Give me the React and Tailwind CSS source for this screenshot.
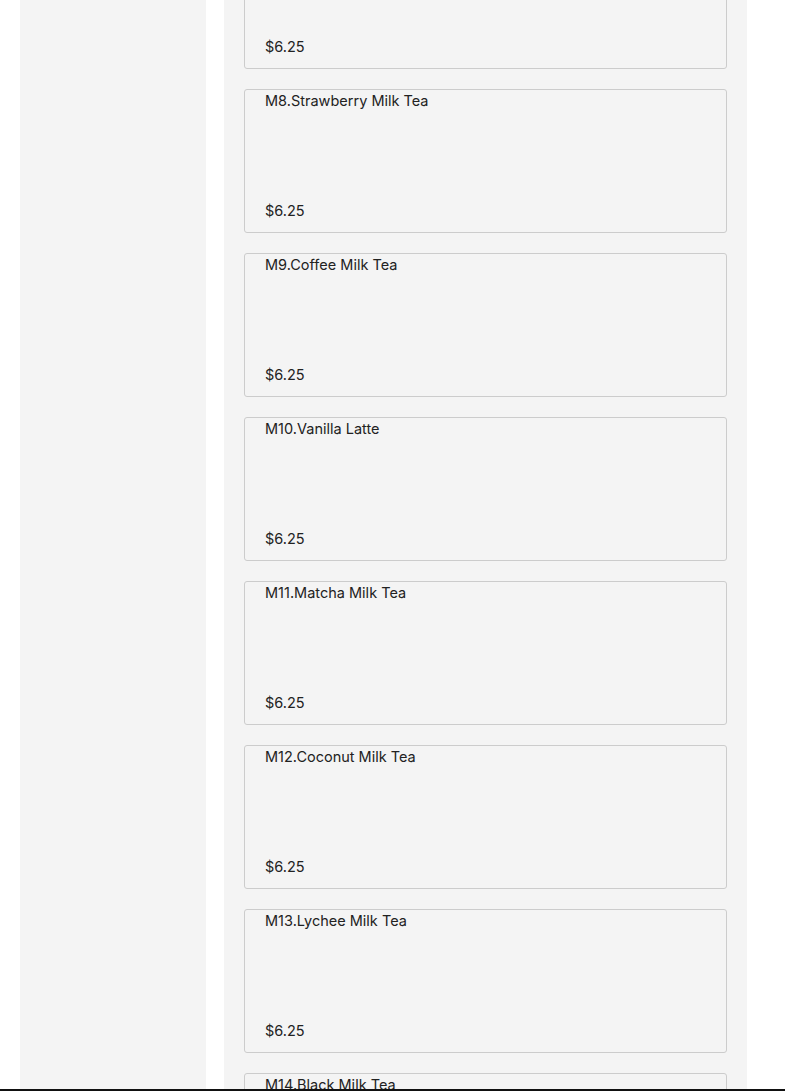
import React from 'react';

const items = [
  { code: 'M7', name: 'Taro Milk Tea', price: '$6.25' },
  { code: 'M8', name: 'Strawberry Milk Tea', price: '$6.25' },
  { code: 'M9', name: 'Coffee Milk Tea', price: '$6.25' },
  { code: 'M10', name: 'Vanilla Latte', price: '$6.25' },
  { code: 'M11', name: 'Matcha Milk Tea', price: '$6.25' },
  { code: 'M12', name: 'Coconut Milk Tea', price: '$6.25' },
  { code: 'M13', name: 'Lychee Milk Tea', price: '$6.25' },
  { code: 'M14', name: 'Black Milk Tea', price: '$6.25' },
];

const MenuCard = ({ item }) => (
  <div className="h-[144px] shrink-0 border border-[#cccccc] rounded-[3px] bg-[#f4f4f4] px-5 pt-[1px] pb-[11px] flex flex-col justify-between">
    <div className="text-[14.5px] leading-[20px] text-[#222]">
      {item.code}.{item.name}
    </div>
    <div className="text-[14.5px] leading-[20px] text-[#222]">{item.price}</div>
  </div>
);

const App = () => {
  return (
    <div
      className="h-[1091px] overflow-hidden bg-white flex"
      style={{ fontFamily: 'Inter, "Noto Sans", sans-serif' }}
    >
      {/* Sidebar */}
      <div className="ml-5 w-[186px] shrink-0 bg-[#f4f4f4]" />

      {/* Menu list */}
      <div className="ml-[18px] w-[523px] shrink-0 bg-[#f4f4f4] px-5">
        <div className="-mt-[75px] flex flex-col gap-5">
          {items.map((item) => (
            <MenuCard key={item.code} item={item} />
          ))}
        </div>
      </div>

      <div className="fixed left-0 right-0 bottom-0 h-[2px] bg-[#111]" />
    </div>
  );
};

export default App;
